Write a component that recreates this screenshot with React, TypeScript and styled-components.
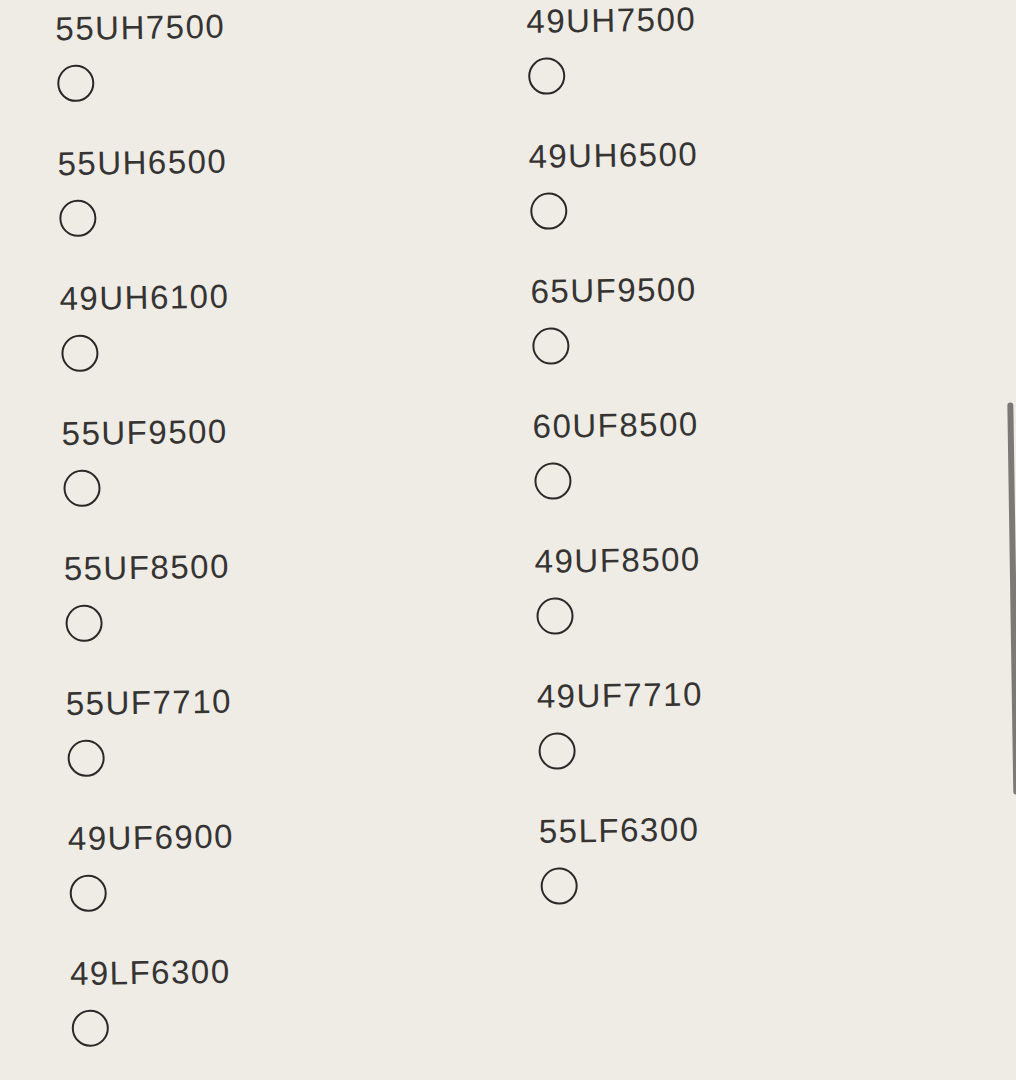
import React from 'react';
import styled, { createGlobalStyle } from 'styled-components';

const leftModels = [
	'55UH7500',
	'55UH6500',
	'49UH6100',
	'55UF9500',
	'55UF8500',
	'55UF7710',
	'49UF6900',
	'49LF6300',
];

const rightModels = [
	'49UH7500',
	'49UH6500',
	'65UF9500',
	'60UF8500',
	'49UF8500',
	'49UF7710',
	'55LF6300',
];

const GlobalStyle = createGlobalStyle`
	html, body {
		margin: 0;
		padding: 0;
		background: #efebe5;
		overflow: hidden;
	}
`;

const Page = styled.div`
	position: relative;
	height: 1080px;
	box-sizing: border-box;
	padding: 10px 0 0 55px;
	transform: rotate(-0.88deg);
	transform-origin: 0 0;
	font-family: 'Liberation Sans', Arial, sans-serif;
`;

const Columns = styled.div`
	display: flex;
`;

const Column = styled.div`
	display: flex;
	flex-direction: column;
	gap: 42px;
	width: 471px;
`;

const Option = styled.label`
	display: flex;
	flex-direction: column;
	align-items: flex-start;
`;

const ModelName = styled.span`
	font-size: 33px;
	line-height: 40px;
	letter-spacing: 1.5px;
	color: #353433;
`;

const Radio = styled.span`
	display: block;
	width: 37px;
	height: 37px;
	margin: 16px 0 0 1px;
	box-sizing: border-box;
	border: 2px solid #2a2928;
	border-radius: 50%;
`;

const ScrollThumb = styled.div`
	position: absolute;
	left: 1001px;
	top: 418px;
	width: 6px;
	height: 392px;
	border-radius: 3px;
	background: #7b7975;
`;

const ModelColumn: React.FunctionComponent<{ models: string[] }> = ({ models }) => (
	<Column>
		{models.map((model) => (
			<Option key={model}>
				<ModelName>{model}</ModelName>
				<Radio />
			</Option>
		))}
	</Column>
);

export default function App() {
	return (
		<>
			<GlobalStyle />
			<Page>
				<Columns>
					<ModelColumn models={leftModels} />
					<ModelColumn models={rightModels} />
				</Columns>
				<ScrollThumb />
			</Page>
		</>
	);
}
